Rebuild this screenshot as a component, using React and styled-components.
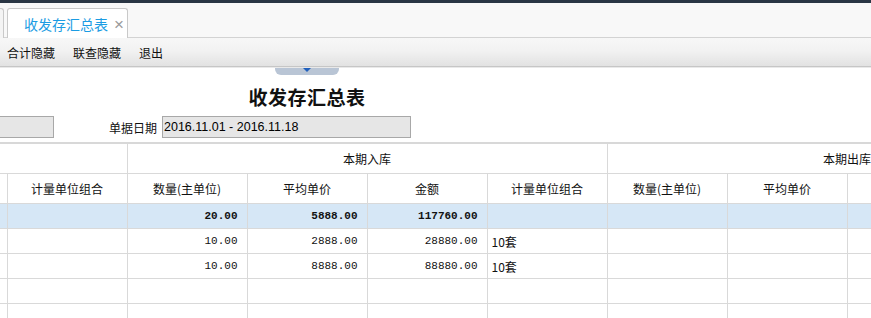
import React from 'react'
import styled, { createGlobalStyle } from 'styled-components'

const GlobalStyle = createGlobalStyle`
  html, body {
    margin: 0;
    padding: 0;
    background: #ffffff;
    overflow: hidden;
  }
  body {
    font-family: "Noto Sans CJK SC", "Liberation Sans", sans-serif;
    color: #111;
  }
`

const Page = styled.div`
  width: 871px;
  height: 318px;
  overflow: hidden;
  background: #fff;
`

const TopBar = styled.div`
  height: 3px;
  background: #2a3644;
`

const TabStrip = styled.div`
  height: 34px;
  background: #f8f8f8;
  border-bottom: 1px solid #d3d3d3;
  display: flex;
  align-items: flex-end;
  gap: 3px;
`

const Tab = styled.div`
  box-sizing: border-box;
  flex: none;
  height: 30px;
  margin-bottom: -1px;
  width: ${p => (p.$stub ? '4px' : '121px')};
  border: 1px solid #c9c9c9;
  border-bottom: none;
  border-left: ${p => (p.$stub ? 'none' : '1px solid #c9c9c9')};
  border-radius: ${p => (p.$stub ? '0 3px 0 0' : '3px 3px 0 0')};
  background: ${p => (p.$stub ? '#f4f4f4' : '#fff')};
  display: flex;
  align-items: center;
  padding-left: ${p => (p.$stub ? 0 : 16)}px;
  gap: 6px;
  font-size: 14px;
  color: #1b9ce3;
  overflow: hidden;
`

const Close = styled.span`
  font-family: "Liberation Sans", sans-serif;
  color: #9a9a9a;
  font-size: 17px;
  line-height: 1;
  margin-top: 1px;
`

const Toolbar = styled.div`
  height: 28px;
  background: linear-gradient(#f7f7f7, #f2f2f2 45%, #e2e2e2);
  border-bottom: 1px solid #c6c6c6;
  box-shadow: 0 1px 0 #e9e9e9;
  display: flex;
  align-items: center;
  padding-left: 7px;
  gap: 18px;
  font-size: 12px;
  color: #111;
`

const Head = styled.div`
  width: 614px;
  display: flex;
  flex-direction: column;
  align-items: center;
`

const Handle = styled.div`
  width: 64px;
  height: 7px;
  margin-top: 1px;
  background: #b9c5d5;
  border-radius: 0 0 6px 6px;
  display: flex;
  justify-content: center;
`

const Arrow = styled.div`
  width: 0;
  height: 0;
  border-left: 4px solid transparent;
  border-right: 4px solid transparent;
  border-top: 4px solid #2160bd;
`

const Title = styled.div`
  margin-top: 10px;
  height: 24px;
  line-height: 24px;
  font-size: 19px;
  font-weight: 700;
  letter-spacing: 0.5px;
  color: #111;
`

const FilterRow = styled.div`
  margin-top: 7px;
  display: flex;
  align-items: center;
  height: 22px;
`

const Field = styled.div`
  box-sizing: border-box;
  width: ${p => p.$w}px;
  height: 22px;
  background: #e6e6e6;
  border: 1px solid #a8a8a8;
  border-left: ${p => (p.$cut ? 'none' : '1px solid #a8a8a8')};
  font-family: "Liberation Sans", Arial, sans-serif;
  font-size: 12.5px;
  line-height: 20px;
  padding-left: 1px;
  color: #000;
`

const Label = styled.span`
  font-size: 12px;
  margin: 0 5px 0 55px;
  color: #111;
`

const TableWrap = styled.div`
  margin-top: 4px;
  width: 871px;
  overflow: hidden;
  border-top: 2px solid #d8d8d8;
`

const Grid = styled.table`
  border-collapse: collapse;
  table-layout: fixed;
  width: 1087px;
  font-size: 12px;
  tr > *:first-child {
    border-left: none;
  }
`

const Th = styled.th`
  font-weight: 400;
  height: 29px;
  padding: 0;
  border: 1px solid #d9d9d9;
  border-top: ${p => (p.$first ? 'none' : '1px solid #d9d9d9')};
  text-align: center;
  white-space: nowrap;
  overflow: hidden;
  color: #111;
`

const Row = styled.tr`
  background: ${p => (p.$total ? '#d6e7f6' : '#fff')};
  font-weight: ${p => (p.$total ? 700 : 400)};
`

const Td = styled.td`
  height: 24px;
  padding: 0 ${p => (p.$left ? '0 0 4px' : '9px 0 0')};
  border: 1px solid #d9d9d9;
  text-align: ${p => (p.$left ? 'left' : 'right')};
  font-family: ${p => (p.$left ? '"Noto Sans CJK SC", sans-serif' : '"Liberation Mono", monospace')};
  font-size: ${p => (p.$left ? '12px' : '11px')};
  white-space: nowrap;
  overflow: hidden;
  color: #111;
`

const cols = [7, 120, 120, 120, 120, 120, 120, 120, 120, 120]

const rows = [
  { total: true, cells: ['', '', '20.00', '5888.00', '117760.00', '', '', '', '', ''] },
  { cells: ['', '', '10.00', '2888.00', '28880.00', '10套', '', '', '', ''] },
  { cells: ['', '', '10.00', '8888.00', '88880.00', '10套', '', '', '', ''] },
  { cells: ['', '', '', '', '', '', '', '', '', ''] },
  { cells: ['', '', '', '', '', '', '', '', '', ''] },
]

const subHeads = ['', '计量单位组合', '数量(主单位)', '平均单价', '金额', '计量单位组合', '数量(主单位)', '平均单价', '金额', '计量单位组合']

export default function App() {
  return (
    <Page>
      <GlobalStyle />
      <TopBar />
      <TabStrip>
        <Tab $stub />
        <Tab>
          收发存汇总表
          <Close>×</Close>
        </Tab>
      </TabStrip>
      <Toolbar>
        <span>合计隐藏</span>
        <span>联查隐藏</span>
        <span>退出</span>
      </Toolbar>
      <Head>
        <Handle>
          <Arrow />
        </Handle>
        <Title>收发存汇总表</Title>
      </Head>
      <FilterRow>
        <Field $w={54} $cut />
        <Label>单据日期</Label>
        <Field $w={249}>2016.11.01 - 2016.11.18</Field>
      </FilterRow>
      <TableWrap>
        <Grid>
          <colgroup>
            {cols.map((w, i) => (
              <col key={i} style={{ width: w }} />
            ))}
          </colgroup>
          <thead>
            <tr>
              <Th $first colSpan={2} />
              <Th $first colSpan={4}>本期入库</Th>
              <Th $first colSpan={4}>本期出库</Th>
            </tr>
            <tr>
              {subHeads.map((h, i) => (
                <Th key={i}>{h}</Th>
              ))}
            </tr>
          </thead>
          <tbody>
            {rows.map((r, i) => (
              <Row key={i} $total={r.total}>
                {r.cells.map((c, j) => (
                  <Td key={j} $left={j === 5 || j === 9 || j === 1}>{c}</Td>
                ))}
              </Row>
            ))}
          </tbody>
        </Grid>
      </TableWrap>
    </Page>
  )
}
